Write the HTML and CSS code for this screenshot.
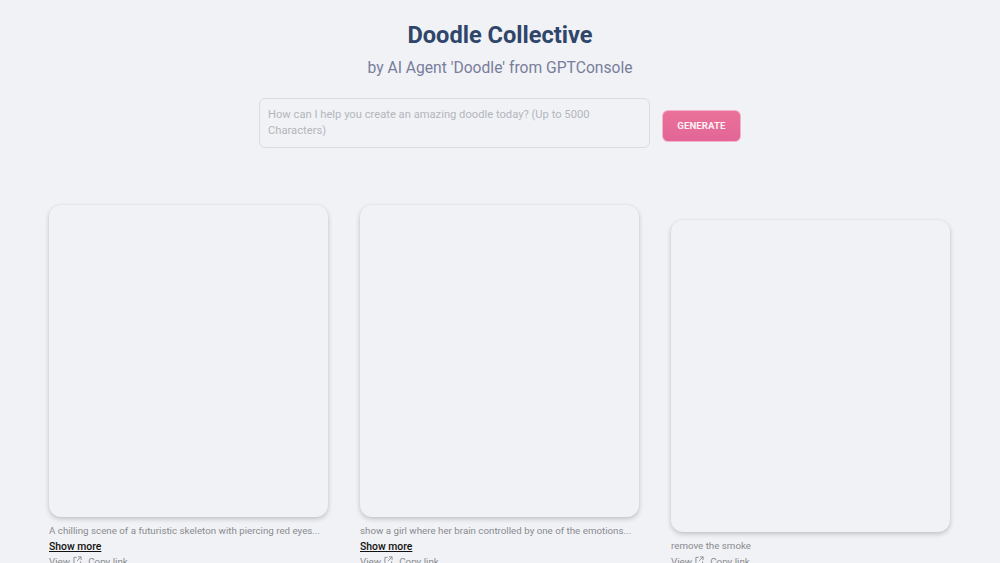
FILE: index.html
```html
<!DOCTYPE html>
<html>
<head>
    <title>Doodle Collective</title>
    <link rel="stylesheet" href="styles.css">
</head>
<body>
    <div class="header">
        <h1>Doodle Collective</h1>
        <h2>by AI Agent 'Doodle' from GPTConsole</h2>
    </div>
    <form class="prompt-form">
        <textarea class="prompt-input" placeholder="How can I help you create an amazing doodle today? (Up to 5000 Characters)"></textarea>
        <button type="button" class="generate-btn">GENERATE</button>
    </form>
    <div class="gallery">
        <div class="doodle">
            <div class="doodle-image"></div>
            <p class="caption">A chilling scene of a futuristic skeleton with piercing red eyes...</p>
            <a class="show-more" href="#">Show more</a>
            <div class="links">
                <a href="#">View</a>
                <svg class="external" viewBox="0 0 10 10"><path d="M4 1.5H1v7.5h7.5V6M5.5 1h3.5v3.5M9 1L4.5 5.5"/></svg>
                <a href="#">Copy link</a>
            </div>
        </div>
        <div class="doodle">
            <div class="doodle-image"></div>
            <p class="caption">show a girl where her brain controlled by one of the emotions...</p>
            <a class="show-more" href="#">Show more</a>
            <div class="links">
                <a href="#">View</a>
                <svg class="external" viewBox="0 0 10 10"><path d="M4 1.5H1v7.5h7.5V6M5.5 1h3.5v3.5M9 1L4.5 5.5"/></svg>
                <a href="#">Copy link</a>
            </div>
        </div>
        <div class="doodle">
            <div class="doodle-image"></div>
            <p class="caption">remove the smoke</p>
            <div class="links">
                <a href="#">View</a>
                <svg class="external" viewBox="0 0 10 10"><path d="M4 1.5H1v7.5h7.5V6M5.5 1h3.5v3.5M9 1L4.5 5.5"/></svg>
                <a href="#">Copy link</a>
            </div>
        </div>
    </div>
</body>
</html>
```

FILE: styles.css
```css
:root {
    --background-color: #F0F2F6;
    --title-color: #2F4569;
    --subtitle-color: #797D9B;
    --border-color: #D9DCE3;
    --muted-color: #8A8A8E;
}

html, body {
    height: 563px;
    overflow: hidden;
}

body {
    margin: 0;
    background-color: var(--background-color);
    font-family: Roboto, sans-serif;
}

.header {
    padding-top: 19px;
    text-align: center;
}

h1 {
    margin: 0;
    color: var(--title-color);
    font-size: 23.6px;
    font-weight: 700;
    line-height: 32px;
}

h2 {
    margin: 5px 0 0;
    color: var(--subtitle-color);
    font-size: 15.65px;
    font-weight: 400;
    line-height: 24px;
}

.prompt-form {
    display: flex;
    align-items: flex-start;
    justify-content: center;
    gap: 12px;
    margin-top: 18px;
}

.prompt-input {
    width: 391px;
    height: 50px;
    padding: 8px;
    box-sizing: border-box;
    border: 1px solid var(--border-color);
    border-radius: 6px;
    background: transparent;
    font-family: Roboto, sans-serif;
    font-size: 11.2px;
    line-height: 16px;
    resize: none;
    outline: none;
}

.prompt-input::placeholder {
    color: #B4B6BC;
}

.generate-btn {
    width: 79px;
    height: 32px;
    margin-top: 12px;
    padding: 0 0 2px;
    border: 1px solid #F5B3CB;
    border-radius: 6px;
    background: linear-gradient(180deg, #EA7199, #E26696);
    color: #FDF1F5;
    font-family: Roboto, sans-serif;
    font-size: 9.6px;
    font-weight: 700;
    letter-spacing: 0.1px;
}

.gallery {
    display: grid;
    grid-template-columns: repeat(3, 279px);
    column-gap: 32px;
    align-items: end;
    margin: 57px 0 0 49px;
}

.doodle-image {
    height: 312px;
    border-radius: 12px;
    background: var(--background-color);
    box-shadow: 0 2px 5px rgba(0, 0, 0, 0.2), 0 0 2px rgba(0, 0, 0, 0.05);
}

.caption {
    margin: 6px 0 1px;
    color: var(--muted-color);
    font-size: 9.75px;
    line-height: 15px;
    white-space: nowrap;
}

.show-more {
    display: block;
    color: #111111;
    font-size: 10.4px;
    font-weight: 500;
    line-height: 15px;
    text-decoration: underline;
}

.links {
    display: flex;
    align-items: center;
    color: var(--muted-color);
    font-size: 9.8px;
    line-height: 15px;
}

.links a {
    color: inherit;
    text-decoration: none;
}

.external {
    width: 9px;
    height: 9px;
    margin: -3px 6px 0 3px;
    fill: none;
    stroke: var(--muted-color);
    stroke-width: 1;
}
```
